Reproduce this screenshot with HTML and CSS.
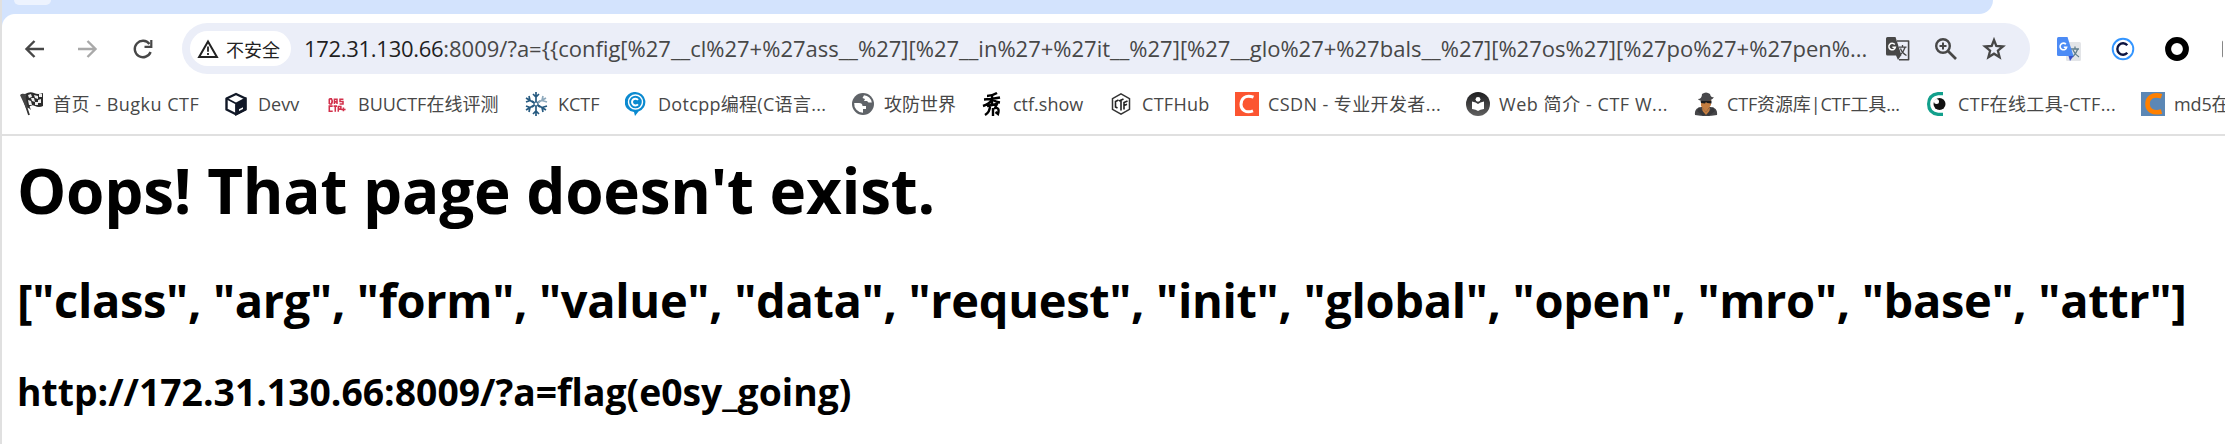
FILE: index.html
```html
<!DOCTYPE html>
<html lang="zh-CN">
<head>
<meta charset="utf-8">
<title>Oops</title>
<link rel="stylesheet" href="styles.css">
</head>
<body>
<div class="window">
<div class="tabstrip"><div class="strip"><span class="tab-foot"></span></div></div>
<header class="chrome">
  <div class="toolbar">
    <nav class="nav">
      <svg class="ic24" viewBox="0 0 24 24"><path d="M22 12H5M12.500 4L4.500 12L12.500 20" fill="none" stroke="#474747" stroke-width="2.400"/></svg>
      <svg class="ic24" viewBox="0 0 24 24"><path d="M2 12H19M11.500 4L19.500 12L11.500 20" fill="none" stroke="#a9a9a9" stroke-width="2.400"/></svg>
      <svg class="ic24" viewBox="-1 0 24 24"><path d="M19.600 15A8.200 8.200 0 1 1 18.500 7" fill="none" stroke="#474747" stroke-width="2.400"/><path d="M20.300 3V9.800H13.500" fill="none" stroke="#474747" stroke-width="2.200"/></svg>
    </nav>
    <div class="omnibox">
      <div class="chip"><svg class="warn" viewBox="0 0 22 20"><path d="M11 2.600L19.900 18H2.100Z" fill="none" stroke="#222" stroke-width="2"/><path d="M11 7.500V12.800M11 14V16" stroke="#222" stroke-width="1.800"/></svg><span class="chip-label">不安全</span></div>
      <div class="url"><span class="host">172.31.130.66</span><span>:8009/?a={{config[%27__cl%27+%27ass__%27][%27__in%27+%27it__%27][%27__glo%27+%27bals__%27][%27os%27][%27po%27+%27pen%...</span></div>
      <div class="actions">
        <svg class="ic24" viewBox="0 0 24 24"><path d="M11 4H22.600V22.800H13" fill="none" stroke="#474747" stroke-width="1.600" stroke-linejoin="round"/><path d="M1.500 0H9.500L15.500 18.500H1.500Q0 18.500 0 17V1.500Q0 0 1.500 0ZM10 18.500H15L12 23Z" fill="#474747"/><path d="M8.800 7.500A3.300 3.300 0 1 0 9.400 10.200H6.400" fill="none" stroke="#fff" stroke-width="1.500"/><path d="M13 10.200H20.500M16.500 8V10M19 10.500Q17.500 15.500 13.500 18.500M14.500 11.500Q16 16 20.500 18.500" fill="none" stroke="#474747" stroke-width="1.300"/></svg>
        <svg class="ic24" viewBox="0 0 24 24"><circle cx="9" cy="9" r="6.800" fill="none" stroke="#474747" stroke-width="2.400"/><path d="M14 14L22 22" fill="none" stroke="#474747" stroke-width="2.600"/><path d="M5.500 9H12.500M9 5.500V12.500" fill="none" stroke="#474747" stroke-width="2"/></svg>
        <svg class="ic24" viewBox="0 0 24 24"><path d="M12 3L14.300 9L21 9.500L15.900 13.700L17.600 20.300L12 16.700L6.400 20.300L8.100 13.700L3 9.500L9.700 9Z" fill="none" stroke="#474747" stroke-width="2.300"/></svg>
      </div>
    </div>
    <div class="extensions">
      <svg class="ic24" viewBox="0 0 24 24"><rect x="9" y="5" width="15" height="19" rx="1.500" fill="#e3e5e8"/><path d="M14 12H22M18 9.500V12M20.500 12.500Q19 17 15.500 20M16 13Q18 17.500 22 20" fill="none" stroke="#607d8b" stroke-width="1.300"/><path d="M11.500 19H16.500L13 24Z" fill="#3b50c8"/><path d="M1.500 0H10.500L16.500 19H1.500Q0 19 0 17.500V1.500Q0 0 1.500 0Z" fill="#4c8bf5"/><path d="M8.900 7.300A3.300 3.300 0 1 0 9.600 10.200H6.800" fill="none" stroke="#fff" stroke-width="1.600"/></svg>
      <svg class="ic24" viewBox="0 0 24 24"><circle cx="12" cy="12" r="10.300" fill="#fff" stroke="#3395ff" stroke-width="1.900"/><path d="M16.300 8.200A5.700 5.700 0 1 0 16.300 15.800" fill="none" stroke="#0d1440" stroke-width="2.400"/></svg>
      <svg class="ic24" viewBox="0 0 24 24"><circle cx="12" cy="12" r="8.900" fill="#fff" stroke="#000" stroke-width="6"/></svg>
      <svg class="ic24" viewBox="-3.500 0 24 24"><rect y="3" width="18" height="18" rx="2" fill="#111"/></svg>
    </div>
  </div>
  <div class="bookmarks">
    <div class="bm"><svg class="ic24" viewBox="0 0 24 24"><path d="M2 2L9 23" stroke="#333" stroke-width="1.800"/><path d="M0 3Q2 1 5 2L11 18Q8 15 6 16Z" fill="#444"/><path d="M5 2Q10-1 14 1T23 1V14Q19 16 15 14T8 16Z" fill="#2c2c2c"/><path d="M8 3L11 2L12 5L9 6ZM14 3L18 4V7L15 6ZM11 6L14 6L15 10L12 9ZM18 8L21 7V11L18 11ZM8 8L11 9L12 13L9 13ZM15 10H18V13L15 13ZM19 2L22 2V5L19 5Z" fill="#eee"/></svg><span class="ls-50">首页 - Bugku CTF</span></div>
    <div class="bm"><svg class="ic24" viewBox="0 0 24 24"><path d="M11 2L20.500 6.500V17.500L11 22.300L1.500 17.500V6.500Z" fill="#fff" stroke="#111827" stroke-width="2.400" stroke-linejoin="round"/><path d="M1.500 6.500L11 11.500L20.500 6.500V17.500L11 22.500V11.500" fill="none" stroke="#111827" stroke-width="1.800"/><path d="M11 11.500L20.500 6.500V17.500L11 22.500Z" fill="#111827"/><path d="M14 17.200L18 15.200V17L14 19Z" fill="#fff"/></svg><span>Devv</span></div>
    <div class="bm"><svg class="ic24" viewBox="-1 -2 28 28"><path d="M4 6V12M4 6H6.500Q8.500 9 6.500 12H4M10 12V6.500H13V12M10 9.500H13M20.500 6.500H16.500V9H20V12H16M8 14.500H4V20.500H8M9 14.500H13M11 14.500V21M14.500 21V15H17.500V18H14.500M18 18.500H23M20.500 16V20.500" fill="none" stroke="#d2304b" stroke-width="1.800"/></svg><span>BUUCTF在线评测</span></div>
    <div class="bm"><svg class="ic24" viewBox="0 0 24 24"><g fill="none" stroke="#265a80" stroke-width="1.700"><path d="M11 0V24M8 2L11 5L14 2M8 22L11 19L14 22M1 6L21 18M1 10L5 8.500L4 4M18 20L17 15.500L22 14"/><path d="M1 18L11 12M1 14L5 15.500L4 20M7 9L11 12L15 9M7 15L11 12L15 15"/><path stroke="#8faabd" d="M12 11L21 6M18 4L17 8.500L22 10"/></g><circle cx="11" cy="12" r="2" fill="#fff" stroke="#265a80"/></svg><span>KCTF</span></div>
    <div class="bm"><svg class="ic24" viewBox="1.500 0 24 24"><path d="M12 0A10 10 0 0 1 15 19.500L11.500 24L10.500 20A10 10 0 0 1 12 0Z" fill="#0b8ad0"/><circle cx="12" cy="10" r="7" fill="none" stroke="#fff" stroke-width="1.400"/><path d="M14.500 7.800A3.400 3.400 0 1 0 14.500 12.300" fill="none" stroke="#fff" stroke-width="2"/></svg><span class="ls-30">Dotcpp编程(C语言...</span></div>
    <div class="bm"><svg class="ic24" viewBox="0 0 24 24"><circle cx="12" cy="12" r="11" fill="#5f6368"/><path d="M13 3.200A9 9 0 0 1 20.800 10.500H17.500L16 9H13L14 7L11.500 6ZM3.200 11H8Q11.500 11 11.500 14H15V17H12V20.800A9 9 0 0 1 3.200 11Z" fill="#fff"/></svg><span>攻防世界</span></div>
    <div class="bm"><svg class="ic24" viewBox="0 0 24 24"><path d="M17 1Q12 4 7 4M4 7.500Q13 7 20 5.500M12 3V14M12 8Q9 12 3 14M13 8Q16 10 20 10.500M7 14L17 12L15 16Q20 15 18 22L15.500 20M10 14Q10 20 5 23M13 16V24" fill="none" stroke="#000" stroke-width="2.400"/></svg><span>ctf.show</span></div>
    <div class="bm"><svg class="ic24" viewBox="0 0 24 24"><path d="M12 1.800L20.500 6.700V17.300L12 22.200L3.500 17.300V6.700Z" fill="none" stroke="#333" stroke-width="1.500"/><path d="M9.500 8L6.500 9.500V15L8.500 16M10 9L14.500 7M12 8.500V18.500M15 17.500V10.500L18.500 9M15 13.500L18 12.200" fill="none" stroke="#222" stroke-width="1.600"/></svg><span class="ls-30">CTFHub</span></div>
    <div class="bm"><svg class="ic24" viewBox="0 0 24 24"><path d="M0 0H24V24H0Z" fill="#fc5531"/><path d="M18.500 5.200C10 2 6 7 6 12.500S11 21.500 18 18.800" fill="none" stroke="#fff" stroke-width="3"/></svg><span class="ls-40">CSDN - 专业开发者...</span></div>
    <div class="bm"><svg class="ic24" viewBox="0 0 24 24"><defs><linearGradient id="g" x2="0" y2="1"><stop stop-color="#1e1e20"/><stop offset="1" stop-color="#606060"/></linearGradient></defs><circle cx="12" cy="12" r="12" fill="url(#g)"/><circle cx="12" cy="7.300" r="2.400" fill="#fff"/><path d="M6 9.500Q10 10 12 12Q14 10 18 9.500V17Q14 17.500 12 19Q10 17.500 6 17Z" fill="#fff"/></svg><span class="ls-55">Web 简介 - CTF W...</span></div>
    <div class="bm"><svg class="ic24" viewBox="0 0 24 24"><path d="M1 23Q0 16 7 15H17Q24 16 23 23Q12 25 1 23Z" fill="#454548"/><path d="M7 8H17V13L12 20L7 14Z" fill="#c47d40"/><path d="M6.500 8.500H17.500V11.500L13 11L12 10L11 11.500L7 11Z" fill="#1c1c1e"/><path d="M4 7Q8 7 8 2Q12-1 16 2Q17 6 20 5Q18 9 11 9Q5 9 4 7Z" fill="#48484b"/><path d="M8 15L12 20L16 15L15 23H9Z" fill="#c47d40"/><path d="M5 15L12 23L9 24L3 19ZM19 15L12 23L15 24L21 19Z" fill="#38383b"/></svg><span class="ls-neg">CTF资源库|CTF工具...</span></div>
    <div class="bm"><svg class="ic24" viewBox="0 0 24 24"><path d="M18 1.600H13Q3.600 3 3.600 12T13 22.400H18" fill="none" stroke="#12a08c" stroke-width="3.200"/><circle cx="14.500" cy="12" r="6" fill="#111"/><circle cx="11.500" cy="9.500" r="2.500" fill="#fff"/></svg><span class="ls-35">CTF在线工具-CTF...</span></div>
    <div class="bm"><svg class="ic24" viewBox="0 0 24 24"><path d="M0 0H24V24H0Z" fill="#5b87b5"/><path d="M20.500 4.200C11 1.500 6.500 6 6.500 12S12 22 20.500 19.500" fill="none" stroke="#ff8000" stroke-width="4.600"/></svg><span class="ls-neg">md5在</span></div>
  </div>
</header>
<main class="page">
  <h1>Oops! That page doesn't exist.</h1>
  <h2>["class", "arg", "form", "value", "data", "request", "init", "global", "open", "mro", "base", "attr"]</h2>
  <h3>http://172.31.130.66:8009/?a=flag(e0sy_going)</h3>
</main>
</div>
</body>
</html>
```
FILE: styles.css
```css
* { box-sizing: border-box; }
body { margin: 0; background: #fff; font-family: "Open Sans", "Noto Sans CJK SC", sans-serif; }
.window { width: 2225px; height: 444px; overflow: hidden; border-left: 2px solid #e0e0e0; }
.tabstrip { height: 14px; background: #fff; }
.strip { width: 1991px; height: 14px; background: #d3e3fd; border-bottom-right-radius: 14px; }
.tab-foot { display: block; width: 37px; height: 5px; margin-left: 12px; background: #edf3fe; border-radius: 0 0 12px 12px; }
.chrome { height: 122px; border-bottom: 2px solid #e0e0e0; background: radial-gradient(circle at 13px 13px, #fff 12.5px, #d3e3fd 13.5px) 0 0 / 13px 13px no-repeat; }
.ic24 { display: block; width: 24px; height: 24px; flex: none; }
.toolbar { display: flex; height: 69px; padding-top: 9px; align-items: flex-start; }
.nav { display: flex; width: 180px; height: 51px; padding-left: 20px; gap: 30px; align-items: center; }
.omnibox { display: flex; align-items: center; width: 1848px; height: 51px; padding-left: 8px; border-radius: 26px; background: #ebeef8; }
.chip { display: flex; align-items: center; width: 101px; height: 35px; padding-left: 7px; border-radius: 18px; background: #fff; }
.warn { width: 22px; height: 20px; margin-right: 7px; }
.chip-label { font-size: 18px; color: #222; white-space: nowrap; }
.url { display: flex; width: 1573px; margin-left: 13px; padding-bottom: 2px; font-size: 22px; line-height: 30px; white-space: nowrap; color: #474747; }
.host { color: #1f1f1f; letter-spacing: -0.3px; }
.actions { display: flex; gap: 24px; margin-left: 9px; }
.extensions { display: flex; gap: 30px; width: 193px; height: 51px; padding-left: 27px; overflow: hidden; align-items: center; }
.bookmarks { display: grid; grid-template-columns: 205px 100px 200px 100px 226px 129px 129px 126px 231px 228px 231px 216px 84px; height: 51px; padding: 9px 0 0 18px; overflow: hidden; }
.bm { display: flex; gap: 9px; height: 24px; align-items: center; font-size: 18px; line-height: 24px; color: #474747; white-space: nowrap; }
.ls-neg { letter-spacing: -0.15px; }
.ls-30 { letter-spacing: 0.3px; }
.ls-35 { letter-spacing: 0.35px; }
.ls-40 { letter-spacing: 0.4px; }
.ls-50 { letter-spacing: 0.5px; }
.ls-55 { letter-spacing: 0.55px; }
.page { padding-left: 15px; color: #000; white-space: nowrap; }
h1, h2, h3 { margin: 0; font-weight: 700; }
h1 { font-size: 62px; line-height: 84px; padding-top: 12px; letter-spacing: -0.25px; }
h2 { font-size: 47px; line-height: 64px; padding-top: 36px; letter-spacing: -0.33px; }
h3 { font-size: 37.3px; line-height: 50px; padding-top: 35px; }
```
